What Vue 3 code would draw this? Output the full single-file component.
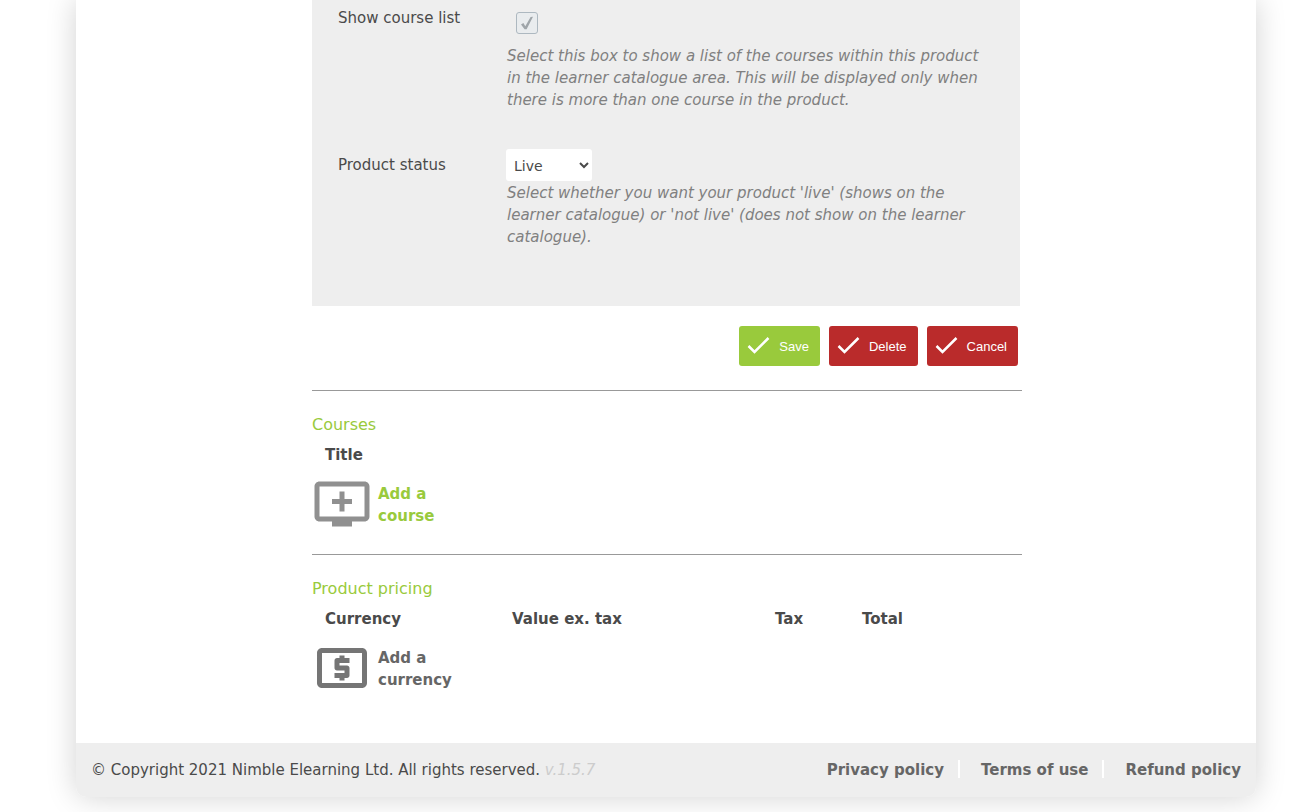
<template>
  <div class="page">
    <main class="content">
      <form class="product-form" @submit.prevent>
        <div class="panel">
          <div class="field">
            <label class="field-label" for="show-courses">Show course list</label>
            <div class="field-body">
              <span class="checkbox">
                <input id="show-courses" v-model="showCourses" type="checkbox" class="checkbox-input" />
                <svg v-if="showCourses" class="checkbox-mark" viewBox="0 0 22 22" aria-hidden="true">
                  <path d="M5 12.4l2.4-1.5 1.9 3.3L14.6 5l2.4-.2-6.4 12.4H8.6z" />
                </svg>
              </span>
              <p class="hint">
                Select this box to show a list of the courses within this product in the learner
                catalogue area. This will be displayed only when there is more than one course in
                the product.
              </p>
            </div>
          </div>

          <div class="field">
            <label class="field-label status-label" for="status">Product status</label>
            <div class="field-body">
              <select id="status" v-model="status" class="select">
                <option value="live">Live</option>
                <option value="not-live">Not live</option>
              </select>
              <p class="hint">
                Select whether you want your product 'live' (shows on the learner catalogue) or
                'not live' (does not show on the learner catalogue).
              </p>
            </div>
          </div>
        </div>

        <div class="actions">
          <button v-for="action in actions" :key="action.label" type="button" class="btn" :class="action.type">
            <svg class="tick" viewBox="0 0 24 24" aria-hidden="true">
              <path d="M1.5 12l6 6L21.5 4" />
            </svg>
            {{ action.label }}
          </button>
        </div>
      </form>

      <section class="section">
        <h2 class="section-title">Courses</h2>
        <table class="grid">
          <thead>
            <tr>
              <th>Title</th>
            </tr>
          </thead>
        </table>
        <a href="#" class="add-link add-course">
          <svg class="add-icon" viewBox="0 0 24 24" aria-hidden="true">
            <path d="M21 3H3c-1.11 0-2 .89-2 2v12c0 1.1.89 2 2 2h5v2h8v-2h5c1.1 0 1.99-.9 1.99-2L23 5c0-1.11-.9-2-2-2zm0 14H3V5h18v12zm-5-7v2h-3v3h-2v-3H8v-2h3V7h2v3h3z" />
          </svg>
          <span class="add-text">Add a course</span>
        </a>
      </section>

      <section class="section">
        <h2 class="section-title">Product pricing</h2>
        <table class="grid">
          <thead>
            <tr>
              <th class="col-currency">Currency</th>
              <th class="col-value">Value ex. tax</th>
              <th class="col-tax">Tax</th>
              <th>Total</th>
            </tr>
          </thead>
        </table>
        <a href="#" class="add-link add-currency">
          <svg class="add-icon" viewBox="0 0 24 24" aria-hidden="true">
            <path d="M11 17h2v-1h1c.55 0 1-.45 1-1v-3c0-.55-.45-1-1-1h-3v-1h4V8h-2V7h-2v1h-1c-.55 0-1 .45-1 1v3c0 .55.45 1 1 1h3v1H9v2h2v1zm9-13H4c-1.11 0-1.99.89-1.99 2L2 18c0 1.11.89 2 2 2h16c1.11 0 2-.89 2-2V6c0-1.11-.89-2-2-2zm0 14H4V6h16v12z" />
          </svg>
          <span class="add-text">Add a currency</span>
        </a>
      </section>
    </main>

    <footer class="footer">
      <p class="copyright">
        © Copyright 2021 Nimble Elearning Ltd. All rights reserved.
        <em class="version">v.1.5.7</em>
      </p>
      <nav class="footer-nav">
        <a v-for="link in links" :key="link" href="#" class="footer-link">{{ link }}</a>
      </nav>
    </footer>
  </div>
</template>

<script setup>
import { ref } from 'vue'

const showCourses = ref(true)
const status = ref('live')

const actions = [
  { label: 'Save', type: 'save' },
  { label: 'Delete', type: 'danger' },
  { label: 'Cancel', type: 'danger' }
]

const links = ['Privacy policy', 'Terms of use', 'Refund policy']
</script>

<style>
body {
  margin: 0;
  background: #fff;
}
</style>

<style scoped>
.page {
  margin: 0 34px 15px 76px;
  border-radius: 0 0 10px 10px;
  box-shadow: 0 0 30px rgba(0, 0, 0, 0.18);
  background: #fff;
  color: #4a4a4a;
  font-family: Verdana, 'DejaVu Sans', sans-serif;
  font-size: 15px;
  line-height: 22px;
}

.content {
  max-width: 708px;
  margin: 0 auto;
  padding-bottom: 45px;
}

.panel {
  padding: 0 26px 58px;
  background: #eee;
}

.field {
  display: flex;
  margin-bottom: 38px;
}

.field:last-child {
  margin-bottom: 0;
}

.field-label {
  width: 168px;
  flex-shrink: 0;
  padding-top: 7px;
}

.status-label {
  padding-top: 5px;
}

.field-body {
  flex: 1;
}

.checkbox {
  display: grid;
  width: 22px;
  height: 22px;
  margin: 12px 0 11px 10px;
}

.checkbox-input,
.checkbox-mark {
  grid-area: 1 / 1;
  width: 22px;
  height: 22px;
}

.checkbox-input {
  appearance: none;
  box-sizing: border-box;
  margin: 0;
  border: 1px solid #adb8c0;
  border-radius: 3px;
  background: #e9ecee;
}

.checkbox-mark {
  fill: #9fa5a9;
  pointer-events: none;
}

.select {
  display: block;
  width: 86px;
  height: 32px;
  margin-bottom: 1px;
  padding: 1px 5px 0 4px;
  border: 0;
  border-radius: 3px;
  background: #fff;
  color: #4a4a4a;
  font: inherit;
  font-size: 14px;
}

.hint {
  margin: 0;
  padding: 0 0 0 1px;
  color: #808080;
  font-style: italic;
}

.actions {
  display: flex;
  justify-content: flex-end;
  gap: 9px;
  padding: 20px 2px 24px 0;
}

.btn {
  display: flex;
  align-items: center;
  gap: 8px;
  height: 40px;
  padding: 0 11px 0 8px;
  border: 0;
  border-radius: 3px;
  color: #fff;
  font-family: Arial, 'Liberation Sans', sans-serif;
  font-size: 13px;
  cursor: pointer;
}

.save {
  background: #99ca3c;
}

.danger {
  background: #ba2b2b;
}

.tick {
  width: 24px;
  height: 24px;
  fill: none;
  stroke: #fff;
  stroke-width: 2.5;
}

.section {
  margin-right: -2px;
  border-top: 1px solid #999;
  padding-top: 23px;
}

.section + .section {
  margin-top: 20px;
}

.section-title {
  margin: 0 0 8px;
  color: #99ca3c;
  font-size: 16px;
  font-weight: normal;
  line-height: 22px;
}

.grid {
  width: 100%;
  margin-bottom: 8px;
  border-collapse: collapse;
  table-layout: fixed;
}

.grid th {
  padding: 0 0 0 13px;
  text-align: left;
}

.col-currency {
  width: 174px;
}

.col-value {
  width: 250px;
}

.col-tax {
  width: 74px;
}

.add-link {
  display: flex;
  width: 150px;
  gap: 6px;
  font-weight: bold;
  text-decoration: none;
}

.add-icon {
  width: 60px;
  height: 60px;
  flex-shrink: 0;
}

.add-text {
  padding-top: 9px;
}

.add-course {
  color: #99ca3c;
}

.add-course .add-icon {
  fill: #909090;
}

.add-currency {
  color: #666;
}

.add-currency .add-icon {
  fill: #757575;
}

.footer {
  display: flex;
  justify-content: space-between;
  padding: 16px 15px;
  border-radius: 0 0 10px 10px;
  background: #eee;
}

.copyright {
  margin: 0;
}

.version {
  color: #ccc;
}

.footer-nav {
  display: flex;
}

.footer-link {
  height: 18px;
  margin-top: 1px;
  padding: 0 14px 0 21px;
  border-right: 2px solid #fff;
  color: #666;
  font-weight: bold;
  line-height: 20px;
  text-decoration: none;
}

.footer-link:last-child {
  padding-right: 0;
  border-right: 0;
}
</style>
